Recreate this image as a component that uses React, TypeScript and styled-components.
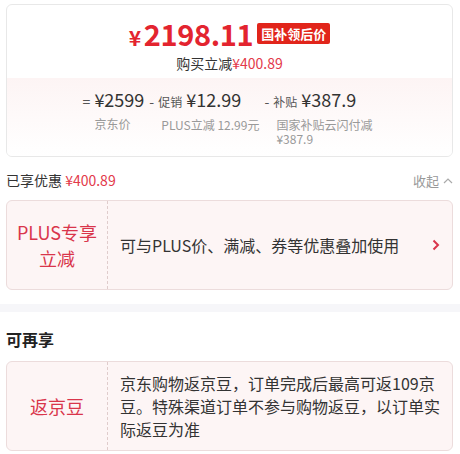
import styled, { createGlobalStyle } from "styled-components";

const GlobalStyle = createGlobalStyle`
  * {
    box-sizing: border-box;
  }
  body {
    margin: 0;
    background: #fff;
    font-family: "Noto Sans CJK SC", "Noto Sans", sans-serif;
    color: #333;
  }
`;

const Page = styled.div`
  width: 460px;
`;

const Section = styled.div`
  padding: 4px 7px 0 6px;
`;

const PriceCard = styled.div`
  border: 1px solid #e8e8e8;
  border-radius: 6px;
  overflow: hidden;
`;

const PriceTop = styled.div`
  display: flex;
  flex-direction: column;
  align-items: center;
  padding: 8px 0 5px;
`;

const PriceLine = styled.div`
  display: flex;
  align-items: center;
  gap: 4px;
  height: 40px;
`;

const Price = styled.span`
  color: #e3242f;
  font-size: 29px;
  font-weight: 700;
  letter-spacing: -0.4px;

  small {
    font-size: 21px;
    margin-right: 3px;
  }
`;

const Badge = styled.span`
  background: #e1251b;
  color: #fff;
  font-size: 13px;
  font-weight: 700;
  line-height: 21px;
  padding: 0 4px;
  border-radius: 2px;
`;

const SubLine = styled.div`
  font-size: 14px;
  line-height: 20px;
  color: #333;

  span {
    color: #e3394a;
  }
`;

const Breakdown = styled.div`
  display: flex;
  justify-content: center;
  gap: 5px;
  padding: 9px 0 10px 0;
  background: linear-gradient(#fdf4f4, #fff);
`;

const Column = styled.div<{ $labelWidth?: number }>`
  display: flex;
  flex-direction: column;

  p {
    margin: 4px 0 0 12px;
    font-size: 12px;
    line-height: 14px;
    color: #999;
    max-width: ${(p) => (p.$labelWidth ? `${p.$labelWidth}px` : "none")};
  }
`;

const Head = styled.div`
  display: flex;
  align-items: baseline;
  gap: 4px;
  white-space: nowrap;
  line-height: 24px;
`;

const Op = styled.span`
  font-size: 14px;
  color: #555;
`;

const Tag = styled.span`
  font-size: 12px;
  color: #555;
`;

const Amount = styled.span`
  font-size: 18px;
  color: #333;
`;

const SavedRow = styled.div`
  display: flex;
  justify-content: space-between;
  align-items: center;
  margin-top: 12px;
  height: 22px;
  font-size: 14px;
  color: #333;

  em {
    font-style: normal;
    color: #e3394a;
  }
`;

const Collapse = styled.span`
  display: flex;
  align-items: center;
  gap: 4px;
  font-size: 13px;
  color: #999;
`;

const PromoCard = styled.div<{ $gap: number }>`
  display: flex;
  height: 90px;
  margin-top: ${(p) => p.$gap}px;
  border: 1px solid #ecdcdc;
  border-radius: 6px;
  background: #fdf5f5;
`;

const PromoTitle = styled.div`
  flex: 0 0 101px;
  display: flex;
  align-items: center;
  justify-content: center;
  text-align: center;
  border-right: 1px dashed #e0cccc;
  color: #d9354b;
  font-size: 18px;
  line-height: 26px;
`;

const PromoText = styled.div<{ $center?: boolean }>`
  flex: 1;
  display: flex;
  align-items: ${(p) => (p.$center ? "center" : "flex-start")};
  padding: ${(p) => (p.$center ? "0 12px 0 12px" : "10px 4px 0 12px")};
  font-size: 16px;
  line-height: 23px;
  color: #333;
`;

const Chevron = styled.svg`
  margin-left: auto;
  flex: 0 0 auto;
`;

const Divider = styled.div`
  height: 8px;
  margin-top: 14px;
  background: #f6f6f9;
`;

const Heading = styled.div`
  font-size: 16px;
  font-weight: 700;
  color: #222;
  margin-top: 12px;
  line-height: 22px;
`;

export default function App() {
  return (
    <Page>
      <GlobalStyle />
      <Section>
        <PriceCard>
          <PriceTop>
            <PriceLine>
              <Price>
                <small>¥</small>2198.11
              </Price>
              <Badge>国补领后价</Badge>
            </PriceLine>
            <SubLine>
              购买立减<span>¥400.89</span>
            </SubLine>
          </PriceTop>
          <Breakdown>
            <Column>
              <Head>
                <Op>=</Op>
                <Amount>¥2599</Amount>
              </Head>
              <p>京东价</p>
            </Column>
            <Column>
              <Head>
                <Op>-</Op>
                <Tag>促销</Tag>
                <Amount>¥12.99</Amount>
              </Head>
              <p>PLUS立减 12.99元</p>
            </Column>
            <Column $labelWidth={100}>
              <Head>
                <Op>-</Op>
                <Tag>补贴</Tag>
                <Amount>¥387.9</Amount>
              </Head>
              <p>国家补贴云闪付减 ¥387.9</p>
            </Column>
          </Breakdown>
        </PriceCard>

        <SavedRow>
          <span>
            已享优惠 <em>¥400.89</em>
          </span>
          <Collapse>
            收起
            <svg width="10" height="7" viewBox="0 0 10 7" fill="none">
              <path d="M1 6l4-4 4 4" stroke="#aaa" strokeWidth="1.2" />
            </svg>
          </Collapse>
        </SavedRow>

        <PromoCard $gap={9}>
          <PromoTitle>
            PLUS专享
            <br />
            立减
          </PromoTitle>
          <PromoText $center>
            可与PLUS价、满减、券等优惠叠加使用
            <Chevron width="8" height="12" viewBox="0 0 8 12" fill="none">
              <path d="M1.5 1.5l4.5 4.5-4.5 4.5" stroke="#d9354b" strokeWidth="2" />
            </Chevron>
          </PromoText>
        </PromoCard>
      </Section>

      <Divider />

      <Section>
        <Heading>可再享</Heading>
        <PromoCard $gap={11}>
          <PromoTitle>返京豆</PromoTitle>
          <PromoText>京东购物返京豆，订单完成后最高可返109京豆。特殊渠道订单不参与购物返豆，以订单实际返豆为准</PromoText>
        </PromoCard>
      </Section>
    </Page>
  );
}
